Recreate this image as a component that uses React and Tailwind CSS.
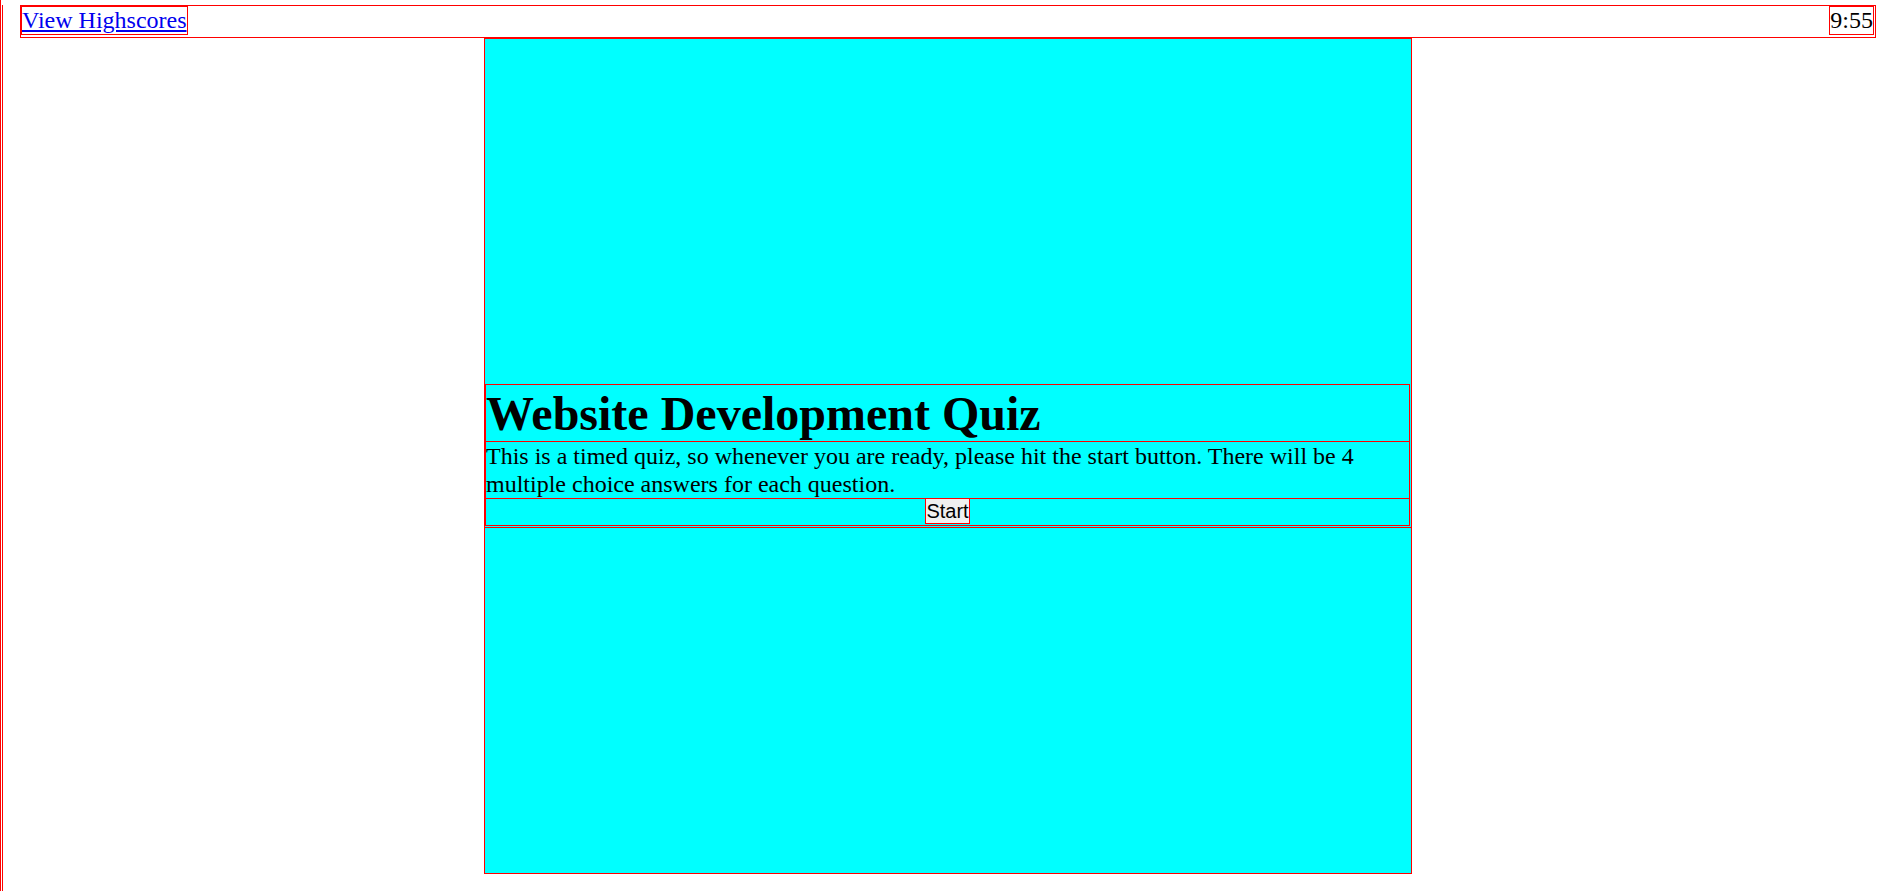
import React, { useState } from 'react';

// Quiz landing page, debug-outline look (every box drawn in red)
const App = () => {
  const [time] = useState('9:55');

  return (
    <div className="h-[891px] w-full overflow-hidden border-l border-[#ff0000] bg-white pl-px font-['Liberation_Serif',serif] text-black">
      <div className="h-[890px] border-b border-l border-[#ff0000]">
        {/* --- HEADER --- */}
        <header className="ml-[17px] mt-[5px] flex h-[33px] w-[1856px] items-start justify-between border border-[#ff0000]">
          <a href="#" className="inline-block border border-[#ff0000] text-[24px] leading-[27px] text-[#0000ee] underline">
            View Highscores
          </a>
          <span className="mr-px inline-block border border-[#ff0000] text-[24px] leading-[27px]">{time}</span>
        </header>

        {/* --- QUIZ BOX --- */}
        <main className="ml-[481px] flex h-[836px] w-[928px] flex-col border border-[#ff0000] bg-[#00ffff]">
          <div className="h-[345px]" />
          <h1 className="w-[925px] border-l border-r border-t border-[#ff0000] pt-[2px] text-[48px] font-bold leading-[54px]">
            Website Development Quiz
          </h1>
          <p className="w-[925px] border border-[#ff0000] text-[24px] leading-[28px]">
            This is a timed quiz, so whenever you are ready, please hit the start button. There will be 4 multiple choice
            answers for each question.
          </p>
          <div className="flex h-[27px] w-[925px] justify-center border-b border-l border-r border-[#ff0000]">
            <button className="-mt-px h-[26px] border border-[#ff0000] bg-[#efefef] px-0 font-['Liberation_Sans',Arial,sans-serif] text-[20px] leading-[24px] text-black">
              Start
            </button>
          </div>
          <div className="h-px" />
          <div className="h-[346px] border-t border-[#ff0000]" />
        </main>
      </div>
    </div>
  );
};

export default App;
